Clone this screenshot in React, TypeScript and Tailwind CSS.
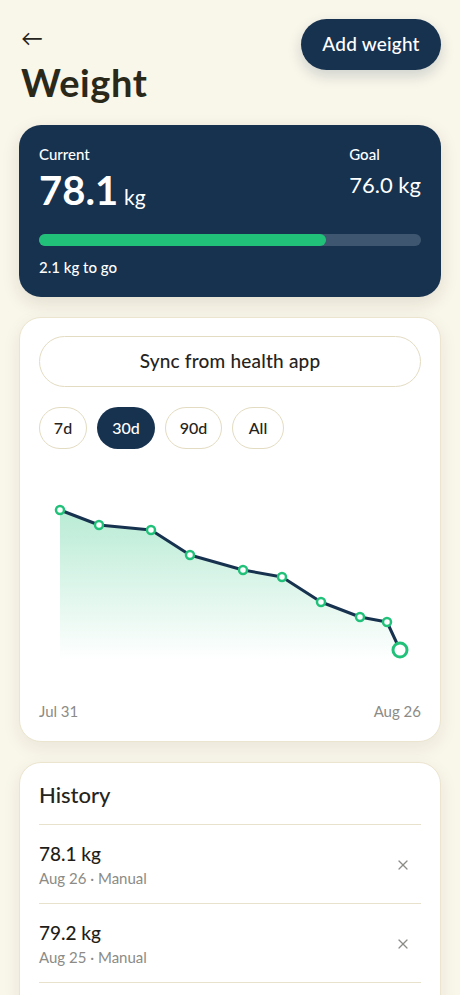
import { X } from 'lucide-react';

const points = [
  [21, 41], [60, 56], [112, 61], [151, 86], [204, 101],
  [243, 108], [282, 133], [321, 148], [348, 153], [361, 181],
];

const history = [
  { weight: '78.1 kg', date: 'Aug 26 · Manual' },
  { weight: '79.2 kg', date: 'Aug 25 · Manual' },
];

const ranges = [
  { label: '7d', w: 'w-[48px]' },
  { label: '30d', w: 'w-[58px]' },
  { label: '90d', w: 'w-[57px]' },
  { label: 'All', w: 'w-[52px]' },
];

function Chart() {
  const line = points.map(([x, y], i) => `${i === 0 ? 'M' : 'L'}${x} ${y}`).join(' ');
  const area = `${line} L361 191 L21 191 Z`;
  return (
    <svg width="382" height="220" viewBox="0 0 382 220" className="block">
      <defs>
        <linearGradient id="fill" x1="0" y1="0" x2="0" y2="1">
          <stop offset="0%" stopColor="#22c17a" stopOpacity="0.32" />
          <stop offset="100%" stopColor="#22c17a" stopOpacity="0" />
        </linearGradient>
      </defs>
      <path d={area} fill="url(#fill)" />
      <path d={line} fill="none" stroke="#17324f" strokeWidth="3" strokeLinejoin="round" strokeLinecap="round" />
      {points.map(([x, y], i) =>
        i === points.length - 1 ? (
          <circle key={i} cx={x} cy={y} r="7" fill="#fff" stroke="#22c17a" strokeWidth="3" />
        ) : (
          <circle key={i} cx={x} cy={y} r="4" fill="#fff" stroke="#22c17a" strokeWidth="2.5" />
        )
      )}
    </svg>
  );
}

export default function App() {
  return (
    <div
      className="min-h-screen bg-[#f9f6ea] px-[19px] pt-[19px] pb-10 text-[#26241c]"
      style={{ fontFamily: 'Lato, "Noto Sans", sans-serif' }}
    >
      <div className="flex items-start justify-between">
        <div className="pt-[8px] pl-[2px]">
          <div className="text-[22px] leading-none text-[#26241c]">←</div>
          <h1 className="mt-[14px] text-[38px] font-bold leading-none tracking-[0.6px] text-[#2a2819]">Weight</h1>
        </div>
        <button className="h-[51px] w-[140px] rounded-full bg-[#17324f] text-[19px] font-medium tracking-[0.2px] text-white shadow-[0_6px_14px_rgba(23,50,79,0.18)]">
          Add weight
        </button>
      </div>

      <div className="mt-[24px] rounded-[22px] bg-[#17324f] px-[20px] pt-[22px] pb-[22px] text-white shadow-[0_6px_18px_rgba(60,50,20,0.12)]">
        <div className="flex justify-between">
          <div>
            <div className="text-[15px] font-medium leading-none">Current</div>
            <div className="mt-[8px] flex items-baseline">
              <span className="text-[40px] font-bold leading-none">78.1</span>
              <span className="ml-[6px] text-[21px] leading-none">kg</span>
            </div>
          </div>
          <div className="text-right">
            <div className="text-left text-[15px] font-medium leading-none">Goal</div>
            <div className="mt-[12px] text-[22px] leading-none">76.0 kg</div>
          </div>
        </div>
        <div className="mt-[24px] h-[12px] w-full rounded-full bg-[#3f5670]">
          <div className="h-full w-[75%] rounded-full bg-[#22c17a]" />
        </div>
        <div className="mt-[14px] text-[15px] font-medium leading-none">2.1 kg to go</div>
      </div>

      <div className="mt-[20px] rounded-[22px] border border-[#ebe5cf] bg-white px-[19px] pt-[18px] pb-[22px] shadow-[0_6px_18px_rgba(60,50,20,0.08)]">
        <button className="h-[51px] w-full rounded-full border border-[#e3dcc2] text-[19px] font-medium tracking-[0.2px] text-[#26241c]">
          Sync from health app
        </button>
        <div className="mt-[20px] flex gap-[10px]">
          {ranges.map((r) => (
            <button
              key={r.label}
              className={
                r.label === '30d'
                  ? `h-[42px] ${r.w} rounded-full bg-[#17324f] text-[16px] font-medium text-white`
                  : `h-[42px] ${r.w} rounded-full border border-[#e3dcc2] text-[16px] font-medium text-[#26241c]`
              }
            >
              {r.label}
            </button>
          ))}
        </div>
        <div className="mt-[20px]">
          <Chart />
        </div>
        <div className="mt-[15px] flex justify-between text-[15px] leading-none text-[#8c8b86]">
          <span>Jul 31</span>
          <span>Aug 26</span>
        </div>
      </div>

      <div className="mt-[20px] rounded-[22px] border border-[#ebe5cf] bg-white px-[19px] pt-[21px] pb-[60px] shadow-[0_6px_18px_rgba(60,50,20,0.08)]">
        <h2 className="pb-[18px] text-[22px] font-medium leading-none">History</h2>
        {history.map((h) => (
          <div key={h.weight} className="flex items-center justify-between border-t border-[#e8e2cc] pt-[19px] pb-[17px]">
            <div>
              <div className="text-[19px] font-medium leading-none text-[#1f1e18]">{h.weight}</div>
              <div className="mt-[8px] text-[15px] leading-none text-[#8c8b86]">{h.date}</div>
            </div>
            <X className="mr-[10px] text-[#8c8b86]" size={16} strokeWidth={1.8} />
          </div>
        ))}
        <div className="border-t border-[#e8e2cc]" />
      </div>
    </div>
  );
}
